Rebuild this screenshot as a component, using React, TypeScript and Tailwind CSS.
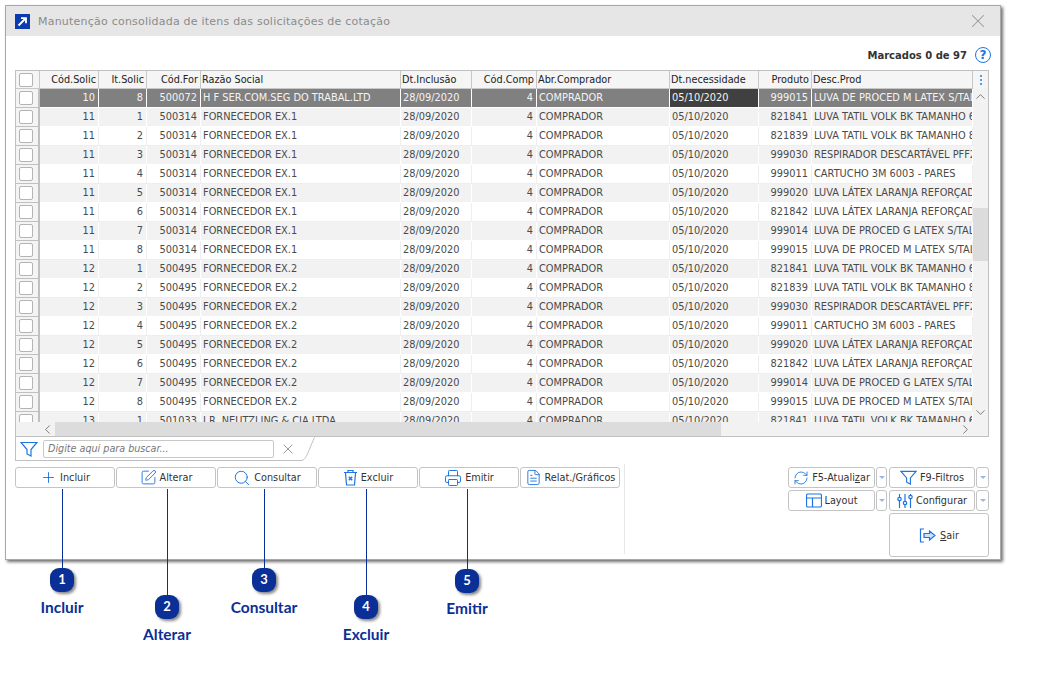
import { ChevronDown, ChevronLeft, ChevronRight, ChevronUp, FileText, Plus, Printer, RefreshCw, Search, SquarePen, X } from "lucide-react"
import type { ReactNode } from "react"

const items: Record<number, [string, string]> = {
  1: ["821841", "LUVA TATIL VOLK BK TAMANHO 6"],
  2: ["821839", "LUVA TATIL VOLK BK TAMANHO 8"],
  3: ["999030", "RESPIRADOR DESCARTÁVEL PFF2"],
  4: ["999011", "CARTUCHO 3M 6003 - PARES"],
  5: ["999020", "LUVA LÁTEX LARANJA REFORÇADA"],
  6: ["821842", "LUVA LÁTEX LARANJA REFORÇADA"],
  7: ["999014", "LUVA DE PROCED G LATEX S/TALCO"],
  8: ["999015", "LUVA DE PROCED M LATEX S/TALCO"],
}

const gridCols = "grid grid-cols-[24px_59px_48px_54px_200px_71px_65px_133px_89px_53px_161px]"

function makeRows() {
  const rows: { sol: string; it: number; cod: string; razao: string }[] = [
    { sol: "10", it: 8, cod: "500072", razao: "H F SER.COM.SEG DO TRABAL.LTD" },
  ]
  for (let i = 1; i <= 8; i++) rows.push({ sol: "11", it: i, cod: "500314", razao: "FORNECEDOR EX.1" })
  for (let i = 1; i <= 8; i++) rows.push({ sol: "12", it: i, cod: "500495", razao: "FORNECEDOR EX.2" })
  rows.push({ sol: "13", it: 1, cod: "501033", razao: "I.R. NEUTZLING & CIA LTDA" })
  return rows
}

function HeadCell({ children, right }: { children?: ReactNode; right?: boolean }) {
  return (
    <div className={`border-r border-[#c8c8c8] overflow-hidden whitespace-nowrap leading-[17px] text-[9.7px] text-[#222] ${right ? "text-right pr-[2px]" : "text-left pl-[1px]"}`}>
      {children}
    </div>
  )
}

function Cell({ children, right, cls }: { children?: ReactNode; right?: boolean; cls: string }) {
  return (
    <div className={`border-r overflow-hidden whitespace-nowrap leading-[18px] text-[9.8px] ${cls} ${right ? "text-right pr-[3px]" : "text-left pl-[2px]"}`}>
      {children}
    </div>
  )
}

function Check() {
  return <div className="w-[14px] h-[14px] rounded-[2px] border border-[#b4b4b4] bg-white" />
}

function Row({ r, index }: { r: ReturnType<typeof makeRows>[number]; index: number }) {
  const selected = index === 0
  const bg = selected ? "bg-[#808080] text-[#f4f4f4]" : index % 2 === 1 ? "bg-[#f2f2f2] text-[#4a4a4a]" : "bg-white text-[#4a4a4a]"
  const line = selected ? "border-white" : index % 2 === 1 ? "border-white" : "border-[#eeeeee]"
  const cls = `${line} border-b`
  const [prod, desc] = items[r.it]
  return (
    <div className={`${gridCols} h-[19px] ${bg}`}>
      <div className="bg-[#f4f4f4] border-r-[2px] border-[#c0c0c0] border-b border-b-[#c0c0c0] flex items-center justify-center pr-[2px]">
        <Check />
      </div>
      <Cell right cls={cls}>{r.sol}</Cell>
      <Cell right cls={cls}>{r.it}</Cell>
      <Cell right cls={cls}>{r.cod}</Cell>
      <Cell cls={cls}>{r.razao}</Cell>
      <Cell cls={cls}>28/09/2020</Cell>
      <Cell right cls={cls}>4</Cell>
      <Cell cls={cls}>COMPRADOR</Cell>
      <Cell cls={selected ? "border-white border-b bg-[#404040]" : cls}>05/10/2020</Cell>
      <Cell right cls={cls}>{prod}</Cell>
      <Cell cls={cls}>{desc}</Cell>
    </div>
  )
}

function Btn({ icon, label, cls }: { icon?: ReactNode; label: ReactNode; cls: string }) {
  return (
    <button className={`flex items-center justify-center gap-[3px] rounded-[3px] border border-[#c4c4c4] bg-white text-[9.7px] text-[#333] ${cls}`}>
      {icon}
      <span className="pt-[2px]">{label}</span>
    </button>
  )
}

function Drop({ cls }: { cls: string }) {
  return (
    <button className={`flex items-center justify-center rounded-[3px] border border-[#c4c4c4] bg-white ${cls}`}>
      <span className="w-0 h-0 border-x-[3px] border-x-transparent border-t-[3px] border-t-[#9ab8e0]" />
    </button>
  )
}

function FunnelIcon({ size }: { size: number }) {
  return (
    <svg width={size} height={size} viewBox="0 0 18 18" fill="none" stroke="#1f74e0" strokeWidth="1.2">
      <path d="M1 2.5h16L11 9.5v6.5l-4-2V9.5z" />
    </svg>
  )
}

function TrashIcon() {
  return (
    <svg width="15" height="17" viewBox="0 0 15 17" fill="none" stroke="#1f74e0" strokeWidth="1.2">
      <path d="M1 3.5h13M5 3V1.5h5V3M2.5 4l1 12h8l1-12" />
      <path d="M5.8 7.8l3.4 3.4M9.2 7.8l-3.4 3.4" strokeWidth="1.5" />
    </svg>
  )
}

function LayoutIcon() {
  return (
    <svg width="16" height="15" viewBox="0 0 16 15" fill="none" stroke="#1f74e0" strokeWidth="1.2">
      <rect x="0.5" y="1" width="15" height="13" rx="1.5" />
      <path d="M0.5 5h15M6.5 5v9" />
    </svg>
  )
}

function SlidersIcon() {
  return (
    <svg width="16" height="16" viewBox="0 0 16 16" fill="none" stroke="#1f74e0" strokeWidth="1.2">
      <path d="M2.5 1v3.5M2.5 8v7M8 1v7.5M8 12v3M13.5 1v1.5M13.5 6v9" />
      <circle cx="2.5" cy="6" r="1.7" />
      <circle cx="8" cy="10" r="1.7" />
      <circle cx="13.5" cy="4" r="1.7" />
    </svg>
  )
}

function ExitIcon() {
  return (
    <svg width="18" height="15" viewBox="0 0 18 15" fill="none" stroke="#1f74e0" strokeWidth="1.2">
      <path d="M5 1H1.5v13H5" />
      <path d="M5 5.5h5.5V3l5.5 4.5L10.5 12V9.5H5z" fill="#cfe1f7" />
    </svg>
  )
}

const callouts = [
  { n: 1, label: "Incluir", line: "left-[62px] h-[81px]", badge: "left-[50px] top-[568px]", text: "left-[12px] w-[100px] top-[598px]" },
  { n: 2, label: "Alterar", line: "left-[167px] h-[108px]", badge: "left-[155px] top-[595px]", text: "left-[117px] w-[100px] top-[625px]" },
  { n: 3, label: "Consultar", line: "left-[264px] h-[81px]", badge: "left-[252px] top-[568px]", text: "left-[214px] w-[100px] top-[598px]" },
  { n: 4, label: "Excluir", line: "left-[366px] h-[108px]", badge: "left-[354px] top-[595px]", text: "left-[316px] w-[100px] top-[625px]" },
  { n: 5, label: "Emitir", line: "left-[467px] h-[81px]", badge: "left-[455px] top-[569px]", text: "left-[417px] w-[100px] top-[599px]" },
]

export default function App() {
  const rows = makeRows()
  return (
    <div className="relative w-[1042px] h-[695px] bg-white overflow-hidden font-['DejaVu_Sans',sans-serif] text-[10px]">
      {/* janela */}
      <div className="absolute left-[5px] top-[5px] w-[996px] h-[555px] bg-white border border-[#a8a8a8] shadow-[2px_2px_3px_#707070] flex flex-col">
        <div className="h-[30px] bg-[#e6e6e6] flex items-center pl-[9px] pr-[11px] shrink-0">
          <svg width="15" height="15" viewBox="0 0 15 15">
            <rect width="15" height="15" fill="#0a3cb0" />
            <path d="M3.5 11.5L10 5M6 4.2h5v5" stroke="#fff" strokeWidth="1.8" fill="none" />
          </svg>
          <span className="ml-[8px] pt-[3px] text-[11px] text-[#8b8b8b] tracking-[0.22px]">Manutenção consolidada de itens das solicitações de cotação</span>
          <X className="ml-auto text-[#999]" size={22} strokeWidth={1.1} />
        </div>

        <div className="h-[34px] flex items-center justify-end gap-[8px] pr-[9px] pt-[3px] shrink-0">
          <span className="font-bold text-[#333] text-[10px] pt-px">Marcados 0 de 97</span>
          <span className="w-[16px] h-[16px] rounded-full border border-[#1f74e0] text-[#1f74e0] text-[12px] font-bold flex items-center justify-center">?</span>
        </div>

        {/* grade */}
        <div className="ml-[9px] w-[974px] border border-[#c0c0c0] h-[367px] shrink-0 overflow-hidden flex flex-col">
          <div className="flex h-[18px] shrink-0 bg-[#f5f5f5]">
            <div className={`${gridCols} w-[957px] border-b border-[#c8c8c8]`}>
              <div className="border-r border-[#c8c8c8] flex items-center justify-center pr-[3px]">
                <Check />
              </div>
              <HeadCell right>Cód.Solic</HeadCell>
              <HeadCell right>It.Solic</HeadCell>
              <HeadCell right>Cód.For</HeadCell>
              <HeadCell>Razão Social</HeadCell>
              <HeadCell>Dt.Inclusão</HeadCell>
              <HeadCell right>Cód.Comp</HeadCell>
              <HeadCell>Abr.Comprador</HeadCell>
              <HeadCell>Dt.necessidade</HeadCell>
              <HeadCell right>Produto</HeadCell>
              <HeadCell>Desc.Prod</HeadCell>
            </div>
            <div className="flex-1 flex flex-col items-center justify-center gap-[2px]">
              <span className="w-[2px] h-[2px] bg-[#5a9ae8]" />
              <span className="w-[2px] h-[2px] bg-[#5a9ae8]" />
              <span className="w-[2px] h-[2px] bg-[#5a9ae8]" />
            </div>
          </div>
          <div className="flex flex-1 min-h-0">
            <div className="w-[957px] flex flex-col overflow-hidden">
              <div className="h-[333px] overflow-hidden shrink-0">
                {rows.map((r, i) => (
                  <Row key={i} r={r} index={i} />
                ))}
              </div>
              <div className="h-[15px] bg-[#f2f2f2] flex items-center shrink-0">
                <div className="w-[39px] shrink-0 flex justify-end"><ChevronLeft size={15} strokeWidth={1.2} className="text-[#555]" /></div>
                <div className="w-[666px] h-[15px] bg-[#dcdcdc]" />
                <div className="ml-auto w-[15px] flex justify-start"><ChevronRight size={15} strokeWidth={1.2} className="text-[#555]" /></div>
              </div>
            </div>
            <div className="flex-1 bg-[#f2f2f2] flex flex-col items-center relative">
              <ChevronUp size={15} strokeWidth={1.2} className="text-[#555]" />
              <div className="w-full h-[53px] bg-[#dcdcdc] mt-[104px]" />
              <ChevronDown size={15} strokeWidth={1.2} className="text-[#555] mt-[144px]" />
            </div>
          </div>
        </div>

        {/* busca */}
        <div className="ml-[9px] h-[24px] w-[300px] relative shrink-0 flex items-center">
          <div className="w-[287px] h-[24px] border-l border-b border-[#c0c0c0] flex items-center pl-[4px]">
            <FunnelIcon size={18} />
            <div className="ml-[5px] w-[231px] h-[18px] border border-[#c8c8c8] rounded-[2px] pl-[4px] leading-[16px] italic text-[9.6px] text-[#777] bg-white">
              Digite aqui para buscar...
            </div>
            <X size={16} strokeWidth={1.3} className="ml-[6px] text-[#888]" />
          </div>
          <svg width="14" height="24" viewBox="0 0 14 24" fill="none" stroke="#c0c0c0" className="-ml-[1px]">
            <path d="M0 23.5C5 23.5 6 17 13.5 0.5" />
          </svg>
        </div>

        {/* botoes */}
        <div className="flex flex-1 mt-[6px] min-h-0">
          <div className="ml-[9px] w-[605px] h-[21px] flex gap-px shrink-0">
            <Btn cls="w-[100px]" icon={<Plus size={17} strokeWidth={1.3} className="text-[#1f74e0]" />} label="Incluir" />
            <Btn cls="w-[100px]" icon={<SquarePen size={17} strokeWidth={1.3} className="text-[#1f74e0]" />} label="Alterar" />
            <Btn cls="w-[100px]" icon={<Search size={18} strokeWidth={1.3} className="text-[#1f74e0]" />} label="Consultar" />
            <Btn cls="w-[100px]" icon={<TrashIcon />} label="Excluir" />
            <Btn cls="w-[100px]" icon={<Printer size={18} strokeWidth={1.3} className="text-[#1f74e0]" />} label="Emitir" />
            <Btn cls="w-[100px]" icon={<FileText size={17} strokeWidth={1.3} className="text-[#1f74e0]" />} label="Relat./Gráficos" />
          </div>
          <div className="ml-[4px] w-px h-[90px] -mt-[3px] bg-[#e8e8e8]" />
          <div className="ml-[163px] w-[201px] grid grid-cols-[87px_11px_87px_13px] gap-x-[1px] gap-y-[2px] auto-rows-[21px]">
            <Btn cls="" icon={<RefreshCw size={16} strokeWidth={1.3} className="text-[#1f74e0]" />} label={<>F5-Atuali<u>z</u>ar</>} />
            <Drop cls="" />
            <Btn cls="ml-px" icon={<FunnelIcon size={17} />} label="F9-Filtros" />
            <Drop cls="" />
            <Btn cls="" icon={<LayoutIcon />} label="Layout" />
            <Drop cls="" />
            <Btn cls="ml-px" icon={<SlidersIcon />} label="Configurar" />
            <Drop cls="" />
            <div className="col-span-2" />
            <Btn cls="col-span-2 h-[44px] ml-px" icon={<ExitIcon />} label={<><u>S</u>air</>} />
          </div>
        </div>
      </div>

      {/* anotacoes */}
      {callouts.map((c) => (
        <div key={c.n}>
          <div className={`absolute top-[489px] w-px bg-[#0a2f96] ${c.line}`} />
          <div className={`absolute w-[24px] h-[24px] rounded-[9px] bg-[#0a2f96] shadow-[2px_2px_3px_#888] text-white font-['Lato',sans-serif] font-bold text-[13px] flex items-center justify-center ${c.badge}`}>
            {c.n}
          </div>
          <div className={`absolute text-center text-[#0a2f96] font-['Lato',sans-serif] font-bold text-[15.5px] leading-[18px] ${c.text}`}>
            {c.label}
          </div>
        </div>
      ))}
    </div>
  )
}
